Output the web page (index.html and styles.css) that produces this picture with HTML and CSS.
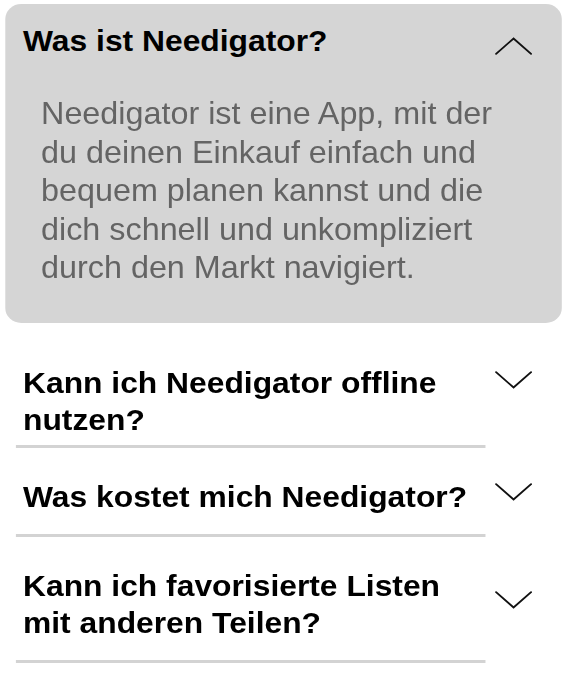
FILE: index.html
```html
<!DOCTYPE html>
<html lang="de">
<head>
<meta charset="utf-8">
<title>FAQ</title>
<link rel="stylesheet" href="styles.css">
</head>
<body>
<div class="faq">
  <section class="card">
    <div class="card-head">
      <h3 class="question">Was ist Needigator?</h3>
      <svg class="chevron" viewBox="0 0 35 18" width="35" height="18" aria-hidden="true"><path d="M1 16.8 L17.5 1.5 L34 16.8"/></svg>
    </div>
    <p class="answer">Needigator ist eine App, mit der du deinen Einkauf einfach und bequem planen kannst und die dich schnell und unkompliziert durch den Markt navigiert.</p>
  </section>

  <div class="item item--top">
    <h3 class="question">Kann ich Needigator offline nutzen?</h3>
    <svg class="chevron" viewBox="0 0 35 18" width="35" height="18" aria-hidden="true"><path d="M1 1.2 L17.5 16.5 L34 1.2"/></svg>
  </div>
  <div class="divider"></div>

  <div class="item">
    <h3 class="question">Was kostet mich Needigator?</h3>
    <svg class="chevron" viewBox="0 0 35 18" width="35" height="18" aria-hidden="true"><path d="M1 1.2 L17.5 16.5 L34 1.2"/></svg>
  </div>
  <div class="divider"></div>

  <div class="item">
    <h3 class="question">Kann ich favorisierte Listen mit anderen Teilen?</h3>
    <svg class="chevron" viewBox="0 0 35 18" width="35" height="18" aria-hidden="true"><path d="M1 1.2 L17.5 16.5 L34 1.2"/></svg>
  </div>
  <div class="divider"></div>
</div>
</body>
</html>
```

FILE: styles.css
```css
html, body {
  margin: 0;
  padding: 0;
  background: #ffffff;
}

body {
  font-family: "Liberation Sans", Arial, Helvetica, sans-serif;
  overflow: hidden;
}

.faq {
  width: 535.85px;
  padding-top: 4px;
  transform: scaleX(1.06);
  transform-origin: 0 0;
}

.card {
  margin: 0 5.65px 11.1px 4.72px;
  background: #d5d5d5;
  border-radius: 15px;
  padding: 21.3px 28.3px 36.3px 17px;
}

.card-head {
  display: flex;
  align-items: flex-start;
  gap: 10px;
}

.card-head .chevron {
  margin-top: 11.5px;
}

.question {
  flex: 1;
  margin: 0;
  font-size: 30px;
  line-height: 32px;
  font-weight: 700;
  color: #000;
}

.item .question {
  line-height: 37px;
}

.answer {
  margin: 36.9px 0 0 17px;
  width: 448px;
  font-size: 30.5px;
  line-height: 38.5px;
  color: #646464;
}

.chevron {
  flex: none;
  fill: none;
  stroke: #111;
  stroke-width: 1.8;
  stroke-linecap: round;
  stroke-linejoin: miter;
}

.item {
  display: flex;
  align-items: center;
  gap: 10px;
  padding: 30px 33.95px 19px 21.7px;
}

.item .chevron {
  margin-bottom: 8px;
}

.item--top {
  align-items: flex-start;
  padding-bottom: 6.9px;
}

.item--top .chevron {
  margin: 7px 0 0;
}

.divider {
  margin-left: 15.1px;
  width: 443.4px;
  height: 3px;
  background: #d3d3d3;
}
```
